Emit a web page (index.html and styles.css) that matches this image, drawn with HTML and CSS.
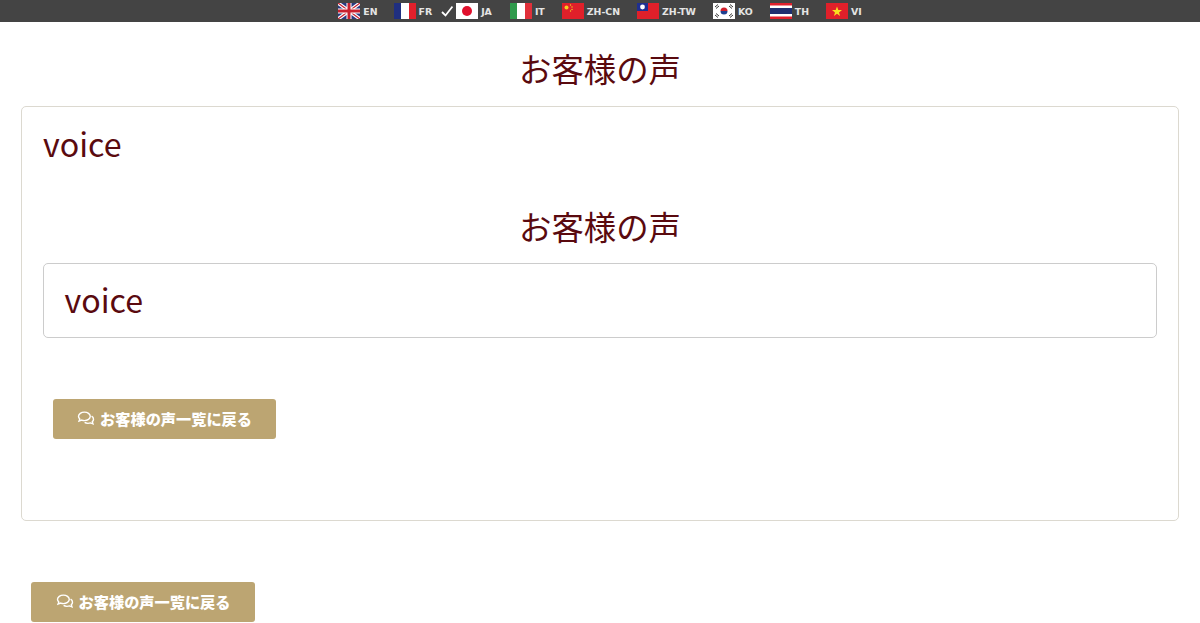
FILE: index.html
```html
<!DOCTYPE html>
<html lang="ja">
<head>
  <meta charset="UTF-8" />
  <meta name="viewport" content="width=device-width, initial-scale=1.0" />
  <title>お客様の声</title>
  <link rel="stylesheet" href="styles.css">
</head>
<body>
  <nav class="lang-bar">
    <a class="lang lang-en">
      <svg class="flag" viewBox="0 0 22 16"><rect width="22" height="16" fill="#2a3a80"/><path d="M0 0L22 16M22 0L0 16" stroke="#fff" stroke-width="3.500"/><path d="M0 0L22 16M22 0L0 16" stroke="#c8202f" stroke-width="1.200"/><path d="M11 0V16M0 8H22" stroke="#fff" stroke-width="5"/><path d="M11 0V16M0 8H22" stroke="#c8202f" stroke-width="3"/></svg>
      EN
    </a>
    <a class="lang">
      <svg class="flag" viewBox="0 0 22 16"><rect width="8" height="16" fill="#1f2f80"/><rect x="7" width="8" height="16" fill="#fff"/><rect x="15" width="7" height="16" fill="#e0202c"/></svg>
      FR
    </a>
    <a class="lang lang-current">
      <svg class="check" viewBox="0 0 12 12"><path d="M1 7L4.500 10.500L11.500 1.500" fill="none" stroke="#fff" stroke-width="1.800"/></svg>
      <svg class="flag" viewBox="0 0 22 16"><rect width="22" height="16" fill="#fff"/><circle cx="11" cy="8" r="5" fill="#e0102c"/></svg>
      JA
    </a>
    <a class="lang">
      <svg class="flag" viewBox="0 0 22 16"><rect width="8" height="16" fill="#2f9a4c"/><rect x="7" width="8" height="16" fill="#fff"/><rect x="15" width="7" height="16" fill="#e0303a"/></svg>
      IT
    </a>
    <a class="lang">
      <svg class="flag" viewBox="0 0 22 16"><rect width="22" height="16" fill="#e0202a"/><circle cx="4.500" cy="4.500" r="2" fill="#f4d020"/><circle cx="8.500" cy="2" r=".7" fill="#f4d020"/><circle cx="10" cy="4" r=".7" fill="#f4d020"/><circle cx="10" cy="6.500" r=".7" fill="#f4d020"/><circle cx="8.500" cy="8" r=".7" fill="#f4d020"/></svg>
      ZH-CN
    </a>
    <a class="lang">
      <svg class="flag" viewBox="0 0 22 16"><rect width="22" height="16" fill="#e0202a"/><rect width="11" height="8" fill="#1f2f90"/><circle cx="5.500" cy="4" r="2.400" fill="#fff"/></svg>
      ZH-TW
    </a>
    <a class="lang">
      <svg class="flag" viewBox="0 0 22 16"><rect width="22" height="16" fill="#fff"/><path d="M7.500 8A3.500 3.500 0 0 1 14.500 8Z" fill="#d0202c"/><path d="M7.500 8A3.500 3.500 0 0 0 14.500 8Z" fill="#1f3f90"/><path d="M2 4L5 1.500M3 5.500L6 3M17 1.500L20 4M16 3L19 5.500M2 12L5 14.500M3 10.500L6 13M17 14.500L20 12M16 13L19 10.500" stroke="#222" stroke-width=".9"/></svg>
      KO
    </a>
    <a class="lang">
      <svg class="flag" viewBox="0 0 22 16"><rect width="22" height="16" fill="#e0202c"/><rect y="2.500" width="22" height="11" fill="#fff"/><rect y="5" width="22" height="6" fill="#1f2f70"/></svg>
      TH
    </a>
    <a class="lang">
      <svg class="flag" viewBox="0 0 22 16"><rect width="22" height="16" fill="#e0202a"/><path d="M11 3.500L12.300 7.100H16L13 9.400L14.100 13L11 10.800L7.900 13L9 9.400L6 7.100H9.700Z" fill="#f8e020"/></svg>
      VI
    </a>
  </nav>

  <main class="page">
    <h1 class="page-title">お客様の声</h1>
    <section class="card">
      <h2 class="card-heading">voice</h2>
      <h1 class="inner-title">お客様の声</h1>
      <div class="card-inner">
        <h2 class="card-heading">voice</h2>
      </div>
      <a class="btn btn-inner">
        <svg class="btn-icon" viewBox="0 0 16 14"><path d="M6.500 1C3.500 1 1 2.800 1 5C1 6 1.500 6.800 2.200 7.400L1.500 9.400L4 8.500C4.800 8.800 5.600 9 6.500 9C9.500 9 12 7.200 12 5C12 2.800 9.500 1 6.500 1Z" fill="none" stroke="#fff" stroke-width="1.300"/><path d="M13.200 4.800C14.300 5.500 15 6.500 15 7.600C15 8.500 14.600 9.300 13.900 9.900L14.500 12L12.200 11.100C11.400 11.400 10.600 11.500 9.800 11.500C8.600 11.500 7.500 11.200 6.700 10.600" fill="none" stroke="#fff" stroke-width="1.300"/></svg>
        お客様の声一覧に戻る
      </a>
    </section>
    <a class="btn btn-outer">
      <svg class="btn-icon" viewBox="0 0 16 14"><path d="M6.500 1C3.500 1 1 2.800 1 5C1 6 1.500 6.800 2.200 7.400L1.500 9.400L4 8.500C4.800 8.800 5.600 9 6.500 9C9.500 9 12 7.200 12 5C12 2.800 9.500 1 6.500 1Z" fill="none" stroke="#fff" stroke-width="1.300"/><path d="M13.200 4.800C14.300 5.500 15 6.500 15 7.600C15 8.500 14.600 9.300 13.900 9.900L14.500 12L12.200 11.100C11.400 11.400 10.600 11.500 9.800 11.500C8.600 11.500 7.500 11.200 6.700 10.600" fill="none" stroke="#fff" stroke-width="1.300"/></svg>
      お客様の声一覧に戻る
    </a>
  </main>
</body>
</html>
```

FILE: styles.css
```css
body {
  font-family: 'Noto Sans CJK JP', 'Noto Sans', sans-serif;
  margin: 0;
  padding: 0;
  background: #fff;
  color: #5a0a0f;
}
.lang-bar {
  background-color: #444;
  height: 22px;
  display: flex;
  justify-content: center;
  align-items: center;
}
.lang {
  display: flex;
  align-items: center;
  gap: 3px;
  padding: 0 8.5px;
  color: #e4e4e4;
  font-family: 'DejaVu Sans', sans-serif;
  font-size: 9.4px;
  font-weight: bold;
}
.lang-en {
  padding-right: 7.5px;
}
.lang-current {
  padding-left: 0.5px;
  padding-right: 9.5px;
}
.flag {
  width: 22px;
  height: 16px;
}
.check {
  width: 12px;
  height: 12px;
}
.page {
  padding: 0 21px;
}
.page-title,
.inner-title {
  font-size: 32.4px;
  font-weight: normal;
  line-height: 40px;
  text-align: center;
  margin: 0;
}
.page-title {
  padding: 26px 0 18px;
}
.inner-title {
  padding: 43px 0 17px;
}
.card {
  border: 1px solid #dcd9d0;
  border-radius: 5px;
  padding: 16px 21px;
  height: 415px;
  box-sizing: border-box;
}
.card-inner {
  border: 1px solid #ccc;
  border-radius: 5px;
  height: 75px;
  padding: 15px 20.5px;
  box-sizing: border-box;
}
.card-heading {
  font-size: 32.2px;
  font-weight: normal;
  line-height: 40px;
  margin: 0;
}
.btn {
  display: flex;
  align-items: center;
  justify-content: center;
  gap: 5px;
  height: 40px;
  padding-bottom: 2px;
  box-sizing: border-box;
  background-color: #bca572;
  border-radius: 3px;
  color: #fff;
  font-size: 15.2px;
  font-weight: 900;
}
.btn-inner {
  width: 223px;
  margin: 61px 0 0 10px;
}
.btn-outer {
  width: 224px;
  margin: 61px 0 0 10px;
}
.btn-icon {
  width: 18px;
  height: 15px;
}
```
